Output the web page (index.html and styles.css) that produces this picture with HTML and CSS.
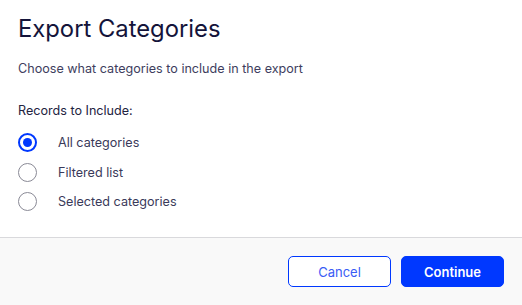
FILE: index.html
```html
<!DOCTYPE html>
<html>
<head>
<meta charset="utf-8">
<link rel="stylesheet" href="styles.css">
</head>
<body>
<div class="dialog">
  <div class="content">
    <h1 class="title">Export Categories</h1>
    <p class="subtitle">Choose what categories to include in the export</p>
    <div class="group-label">Records to Include:</div>
    <div class="options">
      <label class="option"><span class="radio checked"></span><span class="label">All categories</span></label>
      <label class="option"><span class="radio"></span><span class="label">Filtered list</span></label>
      <label class="option"><span class="radio"></span><span class="label">Selected categories</span></label>
    </div>
  </div>
  <div class="footer">
    <button class="btn btn-secondary">Cancel</button>
    <button class="btn btn-primary">Continue</button>
  </div>
</div>
</body>
</html>
```

FILE: styles.css
```css
html, body {
  margin: 0;
  padding: 0;
  background: #ffffff;
}
body {
  font-family: Inter, "Noto Sans", sans-serif;
  color: #2f2f4f;
}
.dialog {
  width: 522px;
  height: 305px;
  display: flex;
  flex-direction: column;
}
.content {
  padding: 15px 18px 0 18px;
  height: 222px;
  border-bottom: 1px solid #d9d9dc;
}
.title {
  margin: 0;
  font-size: 23.8px;
  font-weight: 400;
  line-height: 28px;
  color: #14143a;
}
.subtitle {
  margin: 17px 0 0 0;
  font-size: 12.6px;
  line-height: 18px;
  color: #3e3e5e;
}
.group-label {
  margin-top: 24px;
  font-size: 12.6px;
  line-height: 18px;
  color: #23233f;
}
.options {
  margin-top: 8px;
  display: flex;
  flex-direction: column;
}
.option {
  display: flex;
  align-items: center;
  height: 29.5px;
}
.radio {
  box-sizing: border-box;
  width: 19px;
  height: 19px;
  border-radius: 50%;
  border: 1px solid #8a8a96;
  margin-right: 21px;
  flex-shrink: 0;
  display: flex;
  align-items: center;
  justify-content: center;
}
.radio.checked {
  border: 2px solid #0038ff;
}
.radio.checked::after {
  content: "";
  width: 9px;
  height: 9px;
  border-radius: 50%;
  background: #0038ff;
}
.label {
  font-size: 12.6px;
  color: #3a3a5a;
}
.footer {
  flex: 1;
  background: #f9f9f9;
  display: flex;
  justify-content: flex-end;
  align-items: flex-start;
  padding: 18px 18px 0 0;
  gap: 10px;
}
.btn {
  box-sizing: border-box;
  width: 103px;
  height: 31px;
  border-radius: 5px;
  font-family: Inter, "Noto Sans", sans-serif;
  font-size: 13px;
  cursor: pointer;
}
.btn-secondary {
  background: #ffffff;
  border: 1px solid #0038ff;
  color: #3a5cf5;
}
.btn-primary {
  background: #0038ff;
  border: 1px solid #0038ff;
  color: #ffffff;
  font-weight: 600;
}
```
